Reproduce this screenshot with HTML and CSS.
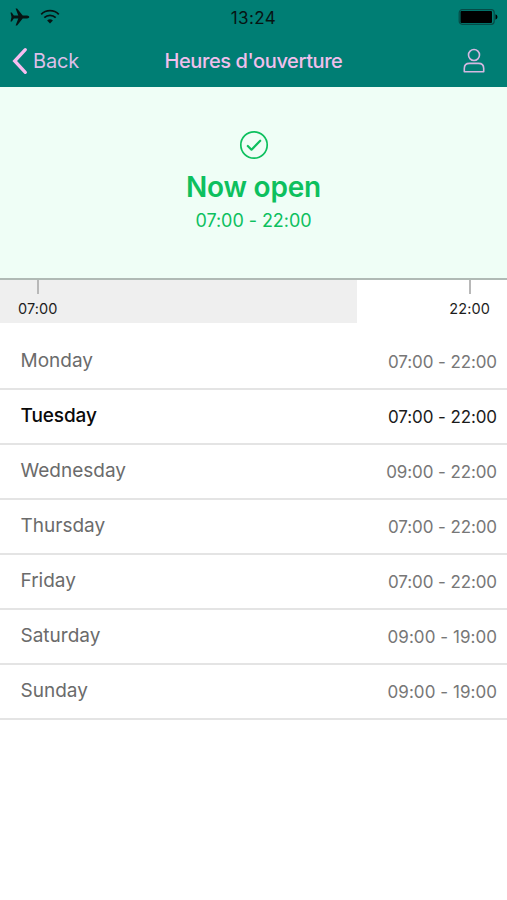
FILE: index.html
```html
<!DOCTYPE html>
<html lang="en">
<head>
<meta charset="utf-8">
<title>Heures d'ouverture</title>
<link rel="stylesheet" href="styles.css">
</head>
<body>
<header class="header">
  <div class="status">
    <div class="status-left">
      <svg class="plane" width="20" height="18" viewBox="0 0 20 18"><path d="M.5 4.600h1.300l2 3h4.500L5.600.500h1.500l5.600 7.100h4.400q2 .3 2.300 1.400-.3 1.100-2.300 1.400h-4.400L7.100 17.500H5.600l2.700-7.100H3.800l-2 3H.5L1.500 9z"/></svg>
      <svg class="wifi" width="20" height="16" viewBox="0 0 20 16"><path d="M1.200 5.300a12.600 12.600 0 0 1 17.600 0M4.300 8.700a8.200 8.200 0 0 1 11.400 0" fill="none" stroke="#071413" stroke-width="1.800"/><path d="M10 14.600 7.100 11.600a4.200 4.200 0 0 1 5.800 0z"/></svg>
    </div>
    <div class="clock">13:24</div>
    <svg class="battery" width="40" height="16" viewBox="0 0 40 16"><rect x="1.200" y=".7" width="35" height="14.600" rx="3" fill="none" stroke="#064b47" stroke-width="1.200"/><rect x="2.500" y="2" width="31.500" height="12" rx="1"/><path d="M37.500 5.300q2 .8 2 2.700t-2 2.700z"/></svg>
  </div>
  <nav class="nav">
    <a class="back"><svg width="16" height="28" viewBox="0 0 16 28"><path d="M13.300 2.700 2.700 14l10.600 11.300" fill="none" stroke="#f6bdf0" stroke-width="3.300" stroke-linecap="round"/></svg><span>Back</span></a>
    <h1 class="title">Heures d'ouverture</h1>
    <svg class="user" width="22" height="26" viewBox="0 0 22 26" fill="none" stroke="#d5b8e2" stroke-width="1.600"><circle cx="11" cy="7" r="5.500"/><path d="M1.300 23.700V20.500Q1.300 15.400 6.500 15.400h9q5.200 0 5.200 5.100v3.200z" stroke-linejoin="round"/></svg>
  </nav>
</header>
<section class="now">
  <svg width="30" height="30" viewBox="0 0 30 30" fill="none" stroke="#0dc05e"><circle cx="15" cy="15" r="13.200" stroke-width="1.700"/><path d="m8.800 16 3.700 3.700 8.700-9" stroke-width="2.200" stroke-linecap="round" stroke-linejoin="round"/></svg>
  <h2 class="now-title">Now open</h2>
  <p class="now-hours">07:00 - 22:00</p>
</section>
<section class="timeline">
  <div class="elapsed"></div>
  <div class="mark"><i></i><span>07:00</span></div>
  <div class="mark"><i></i><span>22:00</span></div>
</section>
<ul class="days">
  <li><span class="day">Monday</span><span class="hours">07:00 - 22:00</span></li>
  <li class="today"><span class="day">Tuesday</span><span class="hours">07:00 - 22:00</span></li>
  <li><span class="day">Wednesday</span><span class="hours">09:00 - 22:00</span></li>
  <li><span class="day">Thursday</span><span class="hours">07:00 - 22:00</span></li>
  <li><span class="day">Friday</span><span class="hours">07:00 - 22:00</span></li>
  <li class="weekend"><span class="day">Saturday</span><span class="hours">09:00 - 19:00</span></li>
  <li class="weekend"><span class="day">Sunday</span><span class="hours">09:00 - 19:00</span></li>
</ul>
</body>
</html>
```
FILE: styles.css
```css
* { box-sizing: border-box; margin: 0; padding: 0; }
body { background: #fff; font-family: Inter, "Liberation Sans", sans-serif; height: 900px; overflow: hidden; }
svg { display: block; flex: none; }
.header { height: 87px; background: #007e74; color: #f0bfec; }
.status { height: 34px; display: grid; grid-template-columns: 1fr auto 1fr; align-items: center; padding: 0 9px 0 10px; fill: #071413; }
.status-left { display: flex; gap: 10px; align-items: center; }
.clock { color: #071413; font-size: 17px; line-height: 34px; letter-spacing: 0.4px; margin-left: -1px; padding-top: 1px; height: 34px; }
.battery { justify-self: end; fill: #000; }
.nav { height: 53px; display: grid; grid-template-columns: 1fr auto 1fr; align-items: center; padding: 0 22px 0 12px; }
.back { display: flex; align-items: center; gap: 5px; font-size: 20px; letter-spacing: -0.2px; color: #dcbfe8; }
.title { font-size: 20px; font-weight: 500; letter-spacing: -0.4px; line-height: 53px; height: 53px; padding-top: 1px; margin: 0 -5px 0 5px; }
.user { justify-self: end; }
.now { height: 193px; background: #effef6; border-bottom: 2px solid #b0bab5; color: #0dc05e; display: flex; flex-direction: column; align-items: center; padding-top: 43px; }
.now-title { font-size: 28px; font-weight: 600; line-height: 34px; letter-spacing: -0.2px; margin-top: 10px; }
.now-hours { font-size: 18px; line-height: 24px; letter-spacing: -0.05px; margin-top: 5px; }
.timeline { height: 43px; display: flex; justify-content: space-between; padding: 0 17px 0 18px; position: relative; }
.elapsed { position: absolute; left: 0; top: 0; width: 357px; height: 43px; background: #efefef; }
.mark { position: relative; display: flex; flex-direction: column; align-items: center; color: #1d1d1d; font-size: 14.500px; line-height: 20px; letter-spacing: 0.1px; }
.mark i { width: 2px; height: 14px; background: #b8b8b8; margin-bottom: 5px; }
.days { list-style: none; padding-top: 12px; }
.days li { height: 55px; border-bottom: 2px solid #e4e4e4; display: flex; justify-content: space-between; align-items: center; padding: 0 10px 2px 20.500px; color: #6b6b6b; }
.day { font-size: 19px; }
.hours { font-size: 17px; letter-spacing: -0.1px; padding-top: 2px; color: #777; }
.today .day { color: #0a0a0a; font-weight: 500; letter-spacing: -0.1px; }
.today .hours { color: #1b1b1b; }
.weekend .hours { letter-spacing: 0.05px; }
```
